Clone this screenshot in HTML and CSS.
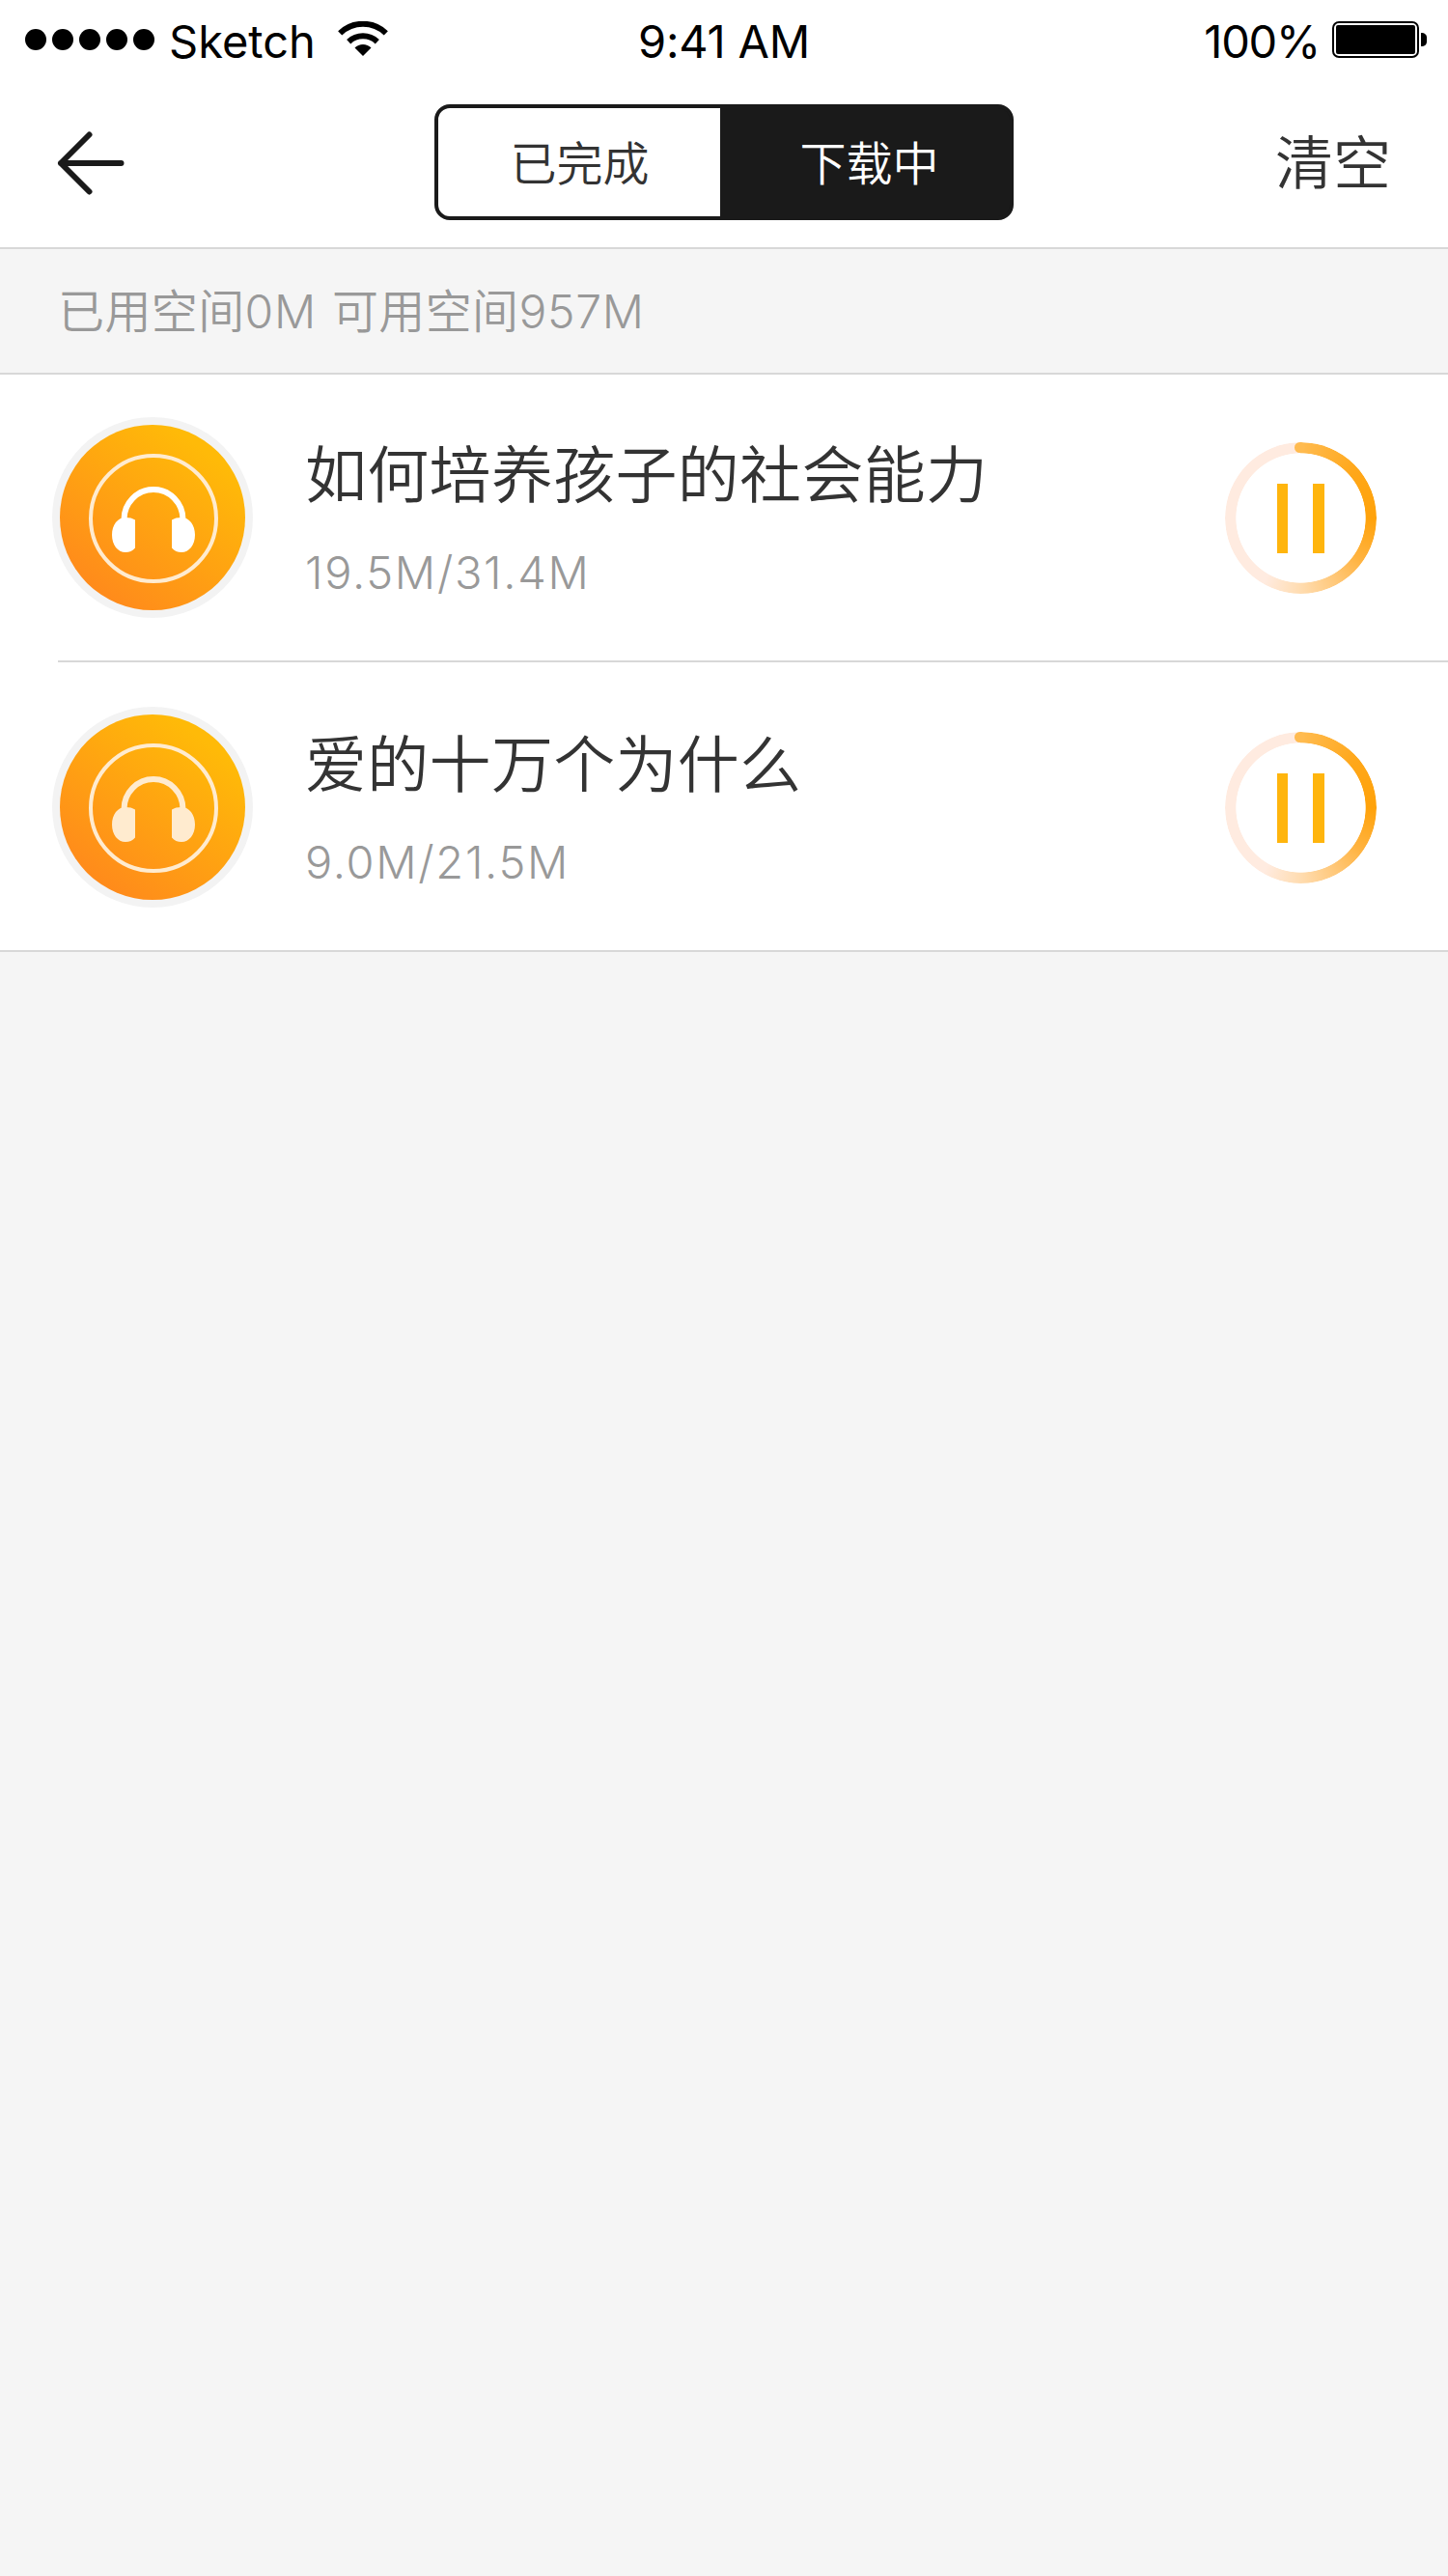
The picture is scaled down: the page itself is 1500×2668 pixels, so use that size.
FILE: index.html
```html
<!DOCTYPE html>
<html lang="zh-CN">
<head>
<meta charset="utf-8">
<title>下载中</title>
<link rel="stylesheet" href="styles.css">
</head>
<body>
<svg class="defs" width="0" height="0" aria-hidden="true">
  <defs>
    <linearGradient id="disc" x1="0.82" y1="0.17" x2="0.25" y2="0.93">
      <stop offset="0" stop-color="#ffba08"/>
      <stop offset="1" stop-color="#ff8b1b"/>
    </linearGradient>
    <symbol id="cover" viewBox="0 0 208 208">
      <circle cx="104" cy="104" r="104" fill="#f3f3f3"/>
      <circle cx="104" cy="104" r="96" fill="url(#disc)"/>
      <circle cx="105" cy="105" r="65" fill="none" stroke="#ffebcf" stroke-width="4"/>
      <path d="M74.500 106a30.500 31 0 0 1 61 0" fill="none" stroke="currentColor" stroke-width="6"/>
      <path d="M86 106.500C83.500 104.800 80 104 76 104C68 104 62 111.500 62 122S68 140 76 140C80 140 83.500 138.500 86 135.500ZM124 106.500C126.500 104.800 130 104 134 104C142 104 148 111.500 148 122S142 140 134 140C130 140 126.500 138.500 124 135.500Z" fill="currentColor"/>
    </symbol>
  </defs>
</svg>
<div class="status">
  <div class="carrier">
    <span class="dots"><i></i><i></i><i></i><i></i><i></i></span>
    <span class="carrier-name">Sketch</span>
    <svg class="wifi" width="52" height="36" viewBox="0 0 52 36">
      <path d="M2.200 12.300A34.500 34.500 0 0 1 49.800 12.300" fill="none" stroke="#000" stroke-width="6"/>
      <path d="M11.200 21.200A21.500 21.500 0 0 1 40.800 21.200" fill="none" stroke="#000" stroke-width="6"/>
      <path d="M17.500 27.500A12 12 0 0 1 34.500 27.500L26 36Z"/>
    </svg>
  </div>
  <span class="time">9:41 AM</span>
  <div class="power">
    <span class="percent">100%</span>
    <svg class="battery" width="98" height="38" viewBox="0 0 98 38">
      <rect x="1" y="1" width="88" height="36" rx="6" fill="none" stroke="#000" stroke-width="2"/>
      <rect x="4" y="4" width="82" height="30" rx="2"/>
      <path d="M92 12C96 12 98 14 98 17V21C98 24 96 26 92 26Z"/>
    </svg>
  </div>
</div>
<header class="nav">
  <svg class="back" width="70" height="66" viewBox="0 0 70 66" fill="none" stroke="#1a1a1a" stroke-width="6" stroke-linecap="round" stroke-linejoin="round">
    <path d="M33.500 3.500L4 33L33.500 62.500M4 33H66.500"/>
  </svg>
  <div class="tabs"><span class="tab">已完成</span><span class="tab active">下载中</span></div>
  <span class="clear">清空</span>
</header>
<div class="space">已用空间<span class="lat">0M</span><span class="avail">可用空间</span><span class="lat">957M</span></div>
<main class="list">
  <div class="row">
    <svg class="cover" width="208" height="208"><use href="#cover"/></svg>
    <div class="info">
      <div class="title">如何培养孩子的社会能力</div>
      <div class="size">19.5M/31.4M</div>
    </div>
    <div class="progress"><i class="bar"></i><i class="bar"></i></div>
  </div>
  <div class="row">
    <svg class="cover dim" width="208" height="208"><use href="#cover"/></svg>
    <div class="info">
      <div class="title">爱的十万个为什么</div>
      <div class="size">9.0M/21.5M</div>
    </div>
    <div class="progress"><i class="bar"></i><i class="bar"></i></div>
  </div>
</main>
</body>
</html>
```
FILE: styles.css
```css
* { box-sizing: border-box; }
body {
  margin: 0;
  min-height: 2668px;
  background: #f5f5f5;
  color: #333;
  font-family: Inter, "Noto Sans CJK SC", sans-serif;
  font-weight: 350;
}
.defs { display: block; position: absolute; }

.status {
  display: grid;
  grid-template-columns: 1fr auto 1fr;
  height: 80px;
  padding: 0 22px 0 26px;
  background: #fff;
  color: #000;
  font-size: 47px;
  font-weight: 380;
  line-height: 86px;
  white-space: nowrap;
}
.carrier, .power { display: flex; align-items: flex-start; }
.power { justify-content: flex-end; }
.dots { display: flex; gap: 6px; margin-top: 30px; }
.dots i { width: 22px; height: 22px; border-radius: 50%; background: #000; }
.carrier-name { width: 174px; padding-left: 15px; letter-spacing: 0; }
.wifi { margin: 22px 0 0 16px; }
.time { letter-spacing: -0.2px; padding-right: 4px; }
.percent { letter-spacing: -1.2px; margin-right: 13px; }
.battery { margin-top: 22px; }

.nav {
  display: grid;
  grid-template-columns: 1fr 600px 1fr;
  height: 178px;
  padding: 28px 59px 0 59px;
  border-bottom: 2px solid #d8d8d8;
  background: #fff;
}
.back { margin-top: 27.7px; }
.tabs {
  display: grid;
  grid-template-columns: 292px 1fr;
  height: 120px;
  overflow: hidden;
  border: 4px solid #1a1a1a;
  border-radius: 16px;
  background: linear-gradient(90deg, #fff 50%, #1a1a1a 50%);
  font-size: 48px;
  line-height: 116px;
  text-align: center;
}
.tab { padding-left: 1px; }
.tab.active { padding-left: 9px; background: #1a1a1a; color: #fff; }
.clear { text-align: right; font-size: 60px; line-height: 123px; }

.space {
  display: flex;
  height: 130px;
  padding-left: 60px;
  border-bottom: 2px solid #d8d8d8;
  color: #999;
  font-size: 48px;
  line-height: 130px;
  letter-spacing: 0.4px;
}
.lat { letter-spacing: 0.7px; font-weight: 320; }
.avail { margin-left: 16px; }

.list { background: #fff; border-bottom: 2px solid #d8d8d8; }
.row {
  display: flex;
  height: 298px;
  margin-left: 60px;
  padding-right: 74.5px;
  border-bottom: 2px solid #d8d8d8;
}
.row:last-child { padding-top: 2px; border-bottom: 0; }
.cover { flex: none; margin: 44px 0 0 -6px; color: #fff; }
.cover.dim { color: #ffebcf; }
.info { flex: 1; padding: 58px 0 0 54px; }
.title { font-size: 64px; line-height: 92px; letter-spacing: 0.3px; }
.size { margin-top: 20px; color: #999; font-size: 47px; line-height: 70px; font-weight: 320; letter-spacing: 1.7px; }

.progress {
  position: relative;
  display: flex;
  justify-content: center;
  align-items: center;
  gap: 26px;
  width: 157px;
  height: 157px;
  margin-top: 70px;
}
.progress::before {
  content: "";
  position: absolute;
  inset: 0;
  border-radius: 50%;
  background: conic-gradient(#ffbb50 0deg, #ffa719 50deg, #ffa20a 90deg, #ffb340 125deg, #ffc777 150deg, #ffdcb0 180deg, #ffebe0 210deg);
  -webkit-mask: radial-gradient(closest-side, transparent 66.800px, #000 67.500px);
  mask: radial-gradient(closest-side, transparent 66.800px, #000 67.500px);
}
.progress::after {
  content: "";
  position: absolute;
  left: 72px;
  top: 0;
  width: 11px;
  height: 11px;
  border-radius: 50%;
  background: #ffbb50;
}
.bar { width: 11.5px; height: 72px; background: #ffb50d; }
```
